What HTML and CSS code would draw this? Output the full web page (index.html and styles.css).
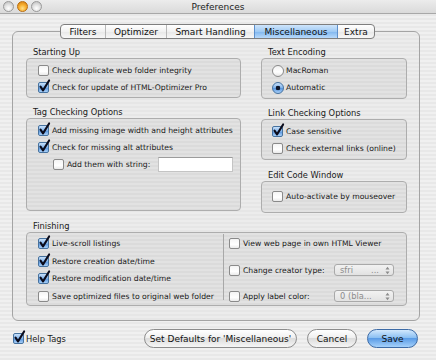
FILE: index.html
```html
<!DOCTYPE html>
<html>
<head>
<meta charset="utf-8">
<title>Preferences</title>
<link rel="stylesheet" href="styles.css">
</head>
<body>
<div class="window">
  <div class="titlebar">
    <div class="lights">
      <span class="light"></span><span class="light min"></span><span class="light"></span>
    </div>
    <div class="title">Preferences</div>
    <div></div>
  </div>

  <div class="tabs">
    <div class="tab t-filters">Filters</div>
    <div class="tab t-opt">Optimizer</div>
    <div class="tab t-smart">Smart Handling</div>
    <div class="tab t-misc sel">Miscellaneous</div>
    <div class="tab t-extra">Extra</div>
  </div>

  <div class="panel">
    <div class="top-grid">
      <div class="col">
        <div class="glabel">Starting Up</div>
        <div class="gbox box-start">
          <div class="row"><span class="cb"></span>Check duplicate web folder integrity</div>
          <div class="row"><span class="cb on"><svg viewBox="0 0 11 11"><path d="M2.3 5.2 L4.6 8.6 L10.2 -0.5"/></svg></span>Check for update of HTML-Optimizer Pro</div>
        </div>
        <div class="glabel gap">Tag Checking Options</div>
        <div class="gbox box-tag">
          <div class="row"><span class="cb on"><svg viewBox="0 0 11 11"><path d="M2.3 5.2 L4.6 8.6 L10.2 -0.5"/></svg></span>Add missing image width and height attributes</div>
          <div class="row"><span class="cb on"><svg viewBox="0 0 11 11"><path d="M2.3 5.2 L4.6 8.6 L10.2 -0.5"/></svg></span>Check for missing alt attributes</div>
          <div class="row indent"><span class="cb"></span><span class="grow">Add them with string:</span><span class="field"></span></div>
        </div>
      </div>
      <div class="col">
        <div class="glabel">Text Encoding</div>
        <div class="gbox box-enc">
          <div class="row"><span class="rb"></span>MacRoman</div>
          <div class="row"><span class="rb on"></span>Automatic</div>
        </div>
        <div class="glabel gap">Link Checking Options</div>
        <div class="gbox box-link">
          <div class="row"><span class="cb on"><svg viewBox="0 0 11 11"><path d="M2.3 5.2 L4.6 8.6 L10.2 -0.5"/></svg></span>Case sensitive</div>
          <div class="row"><span class="cb"></span>Check external links (online)</div>
        </div>
        <div class="glabel gap2">Edit Code Window</div>
        <div class="gbox box-edit">
          <div class="row"><span class="cb"></span>Auto-activate by mouseover</div>
        </div>
      </div>
    </div>

    <div class="glabel gap3">Finishing</div>
    <div class="gbox box-fin">
      <div class="fin-left">
        <div class="frow"><span class="cb on"><svg viewBox="0 0 11 11"><path d="M2.3 5.2 L4.6 8.6 L10.2 -0.5"/></svg></span>Live-scroll listings</div>
        <div class="frow"><span class="cb on"><svg viewBox="0 0 11 11"><path d="M2.3 5.2 L4.6 8.6 L10.2 -0.5"/></svg></span>Restore creation date/time</div>
        <div class="frow"><span class="cb on"><svg viewBox="0 0 11 11"><path d="M2.3 5.2 L4.6 8.6 L10.2 -0.5"/></svg></span>Restore modification date/time</div>
        <div class="frow"><span class="cb"></span>Save optimized files to original web folder</div>
      </div>
      <div class="fin-right">
        <div class="frow"><span class="cb"></span>View web page in own HTML Viewer</div>
        <div class="frow"><span class="cb"></span><span class="grow">Change creator type:</span>
          <span class="popup"><span class="ptext">sfri</span><span class="pdots">...</span><svg class="parr" viewBox="0 0 5 9"><path d="M0.5 3.5 L2.5 0.8 L4.5 3.5 Z M0.5 5.5 L2.5 8.2 L4.5 5.5 Z"/></svg></span>
        </div>
        <div class="frow"><span class="cb"></span><span class="grow">Apply label color:</span>
          <span class="popup"><span class="ptext">0 (bla...</span><svg class="parr" viewBox="0 0 5 9"><path d="M0.5 3.5 L2.5 0.8 L4.5 3.5 Z M0.5 5.5 L2.5 8.2 L4.5 5.5 Z"/></svg></span>
        </div>
      </div>
    </div>
  </div>

  <div class="bottom">
    <div class="help"><span class="cb on"><svg viewBox="0 0 11 11"><path d="M2.3 5.2 L4.6 8.6 L10.2 -0.5"/></svg></span>Help Tags</div>
    <div class="btn b-defaults">Set Defaults for 'Miscellaneous'</div>
    <div class="btn b-cancel">Cancel</div>
    <div class="btn b-save">Save</div>
  </div>
</div>
</body>
</html>
```

FILE: styles.css
```css
* { box-sizing: border-box; }
html, body { margin: 0; padding: 0; }
body {
  width: 436px;
  height: 360px;
  overflow: hidden;
  font-family: "DejaVu Sans", "Liberation Sans", sans-serif;
  font-size: 7.7px;
  color: #1a1a1a;
}
.window {
  width: 436px;
  height: 360px;
  background: repeating-linear-gradient(to bottom, #f0f0f0 0 2px, #e8e8e8 2px 4px);
  display: flex;
  flex-direction: column;
}

/* title bar */
.titlebar {
  height: 14px;
  display: grid;
  grid-template-columns: 1fr auto 1fr;
  align-items: center;
  border-bottom: 1px solid #a8a8a8;
  background: linear-gradient(#ececec, #dadada);
}
.lights { display: flex; gap: 3px; padding-left: 3px; }
.light {
  width: 11px; height: 11px; border-radius: 50%;
  border: 1px solid #9a9a9a;
  background: radial-gradient(circle at 50% 70%, #ffffff 0, #e6e6e6 40%, #b8b8b8 100%);
}
.light.min {
  border-color: #b86d10;
  background: radial-gradient(circle at 50% 70%, #ffe08a 0, #f8b030 45%, #d07810 100%);
}
.title { font-size: 9px; color: #222; }

/* tabs */
.tabs {
  position: relative;
  z-index: 1;
  display: flex;
  margin: 10px 0 0 60px;
  height: 15px;
  width: 315px;
  border: 1px solid #7e7e7e;
  border-radius: 4px;
  overflow: hidden;
  background: linear-gradient(#ffffff, #f1f1f1 50%, #e7e7e7 51%, #f7f7f7);
  font-size: 9px;
}
.tab {
  display: flex; align-items: center; justify-content: center;
  border-right: 1px solid #b8b8b8;
  color: #111;
}
.tab:last-child { border-right: none; }
.t-filters { width: 45px; }
.t-opt { width: 61px; }
.t-smart { width: 88px; }
.t-misc { width: 84px; }
.t-extra { flex: 1; }
.tab.sel {
  background: linear-gradient(#cfe5fb, #9fcaf4 50%, #7fb6ef 51%, #b9dafb);
  border-left: 1px solid #5d8fcb;
  border-right: 1px solid #5d8fcb;
  margin-left: -1px;
}

/* panel */
.panel {
  margin: -8px 16px 0 12px;
  height: 290px;
  border: 1px solid #a4a4a4;
  border-radius: 6px;
  padding: 14px 12px 0 13px;
  background: repeating-linear-gradient(to bottom, #ececec 0 2px, #e6e6e6 2px 4px);
}
.top-grid {
  display: grid;
  grid-template-columns: 215px 146px;
  column-gap: 20px;
}
.col { display: flex; flex-direction: column; }
.glabel {
  height: 12px;
  line-height: 12px;
  padding-left: 7px;
  font-size: 8.3px;
}
.glabel.gap { margin-top: 8px; }
.glabel.gap2 { margin-top: 9px; }
.glabel.gap3 { margin-top: 7px; }

.gbox {
  border: 1px solid #adadad;
  border-radius: 4px;
  background: repeating-linear-gradient(to bottom, #e2e2e2 0 2px, #dbdbdb 2px 4px);
  padding: 3px 0 0 11px;
}
.box-start { height: 40px; }
.box-tag { height: 93px; }
.box-enc { height: 41px; padding-left: 10px; }
.box-link { height: 41px; padding-left: 10px; }
.box-edit { height: 32px; padding: 6px 0 0 10px; }

.row {
  display: flex;
  align-items: center;
  height: 17px;
  white-space: nowrap;
}
.row.indent { padding-left: 15px; padding-right: 7px; }
.grow { flex: 1; }

.cb {
  position: relative;
  flex: none;
  width: 11px; height: 11px;
  margin-right: 3px;
  border: 1px solid #8a8a8a;
  border-radius: 2px;
  background: linear-gradient(#f4f4f4, #ffffff 60%, #eaeaea);
}
.cb.on {
  border-color: #46729f;
  background: linear-gradient(#c9e1fa, #7fb2ea 50%, #5b98e0 55%, #a9d0f8);
}
.cb svg {
  position: absolute;
  left: -1px; top: -2px;
  width: 12px; height: 12px;
  overflow: visible;
}
.cb svg path { fill: none; stroke: #0b0b1a; stroke-width: 1.9; stroke-linecap: round; stroke-linejoin: round; }

.rb {
  flex: none;
  width: 12px; height: 12px;
  margin-right: 2px;
  border: 1px solid #8a8a8a;
  border-radius: 50%;
  background: linear-gradient(#f2f2f2, #ffffff 60%, #e6e6e6);
}
.rb.on {
  border-color: #46729f;
  background: radial-gradient(circle, #10162a 0 2px, transparent 2.6px), linear-gradient(#c9e1fa, #7fb2ea 50%, #5b98e0 55%, #a9d0f8);
}

.field {
  width: 75px; height: 15px;
  background: #fff;
  border: 1px solid #c4c4c4;
  border-top-color: #9c9c9c;
}

/* finishing */
.box-fin {
  height: 74px;
  padding: 2px 0 0 11px;
  display: flex;
}
.fin-left {
  width: 186px;
  border-right: 1px solid #a8a8a8;
  margin-bottom: 5px;
  margin-top: -1px;
  padding-top: 1px;
}
.fin-left .frow { height: 17.5px; }
.fin-right {
  flex: 1;
  padding: 0 12px 0 5px;
  display: flex;
  flex-direction: column;
  justify-content: space-between;
  height: 70px;
}
.frow {
  display: flex;
  align-items: center;
  height: 17.5px;
  white-space: nowrap;
}
.popup {
  display: flex;
  align-items: center;
  width: 60px;
  height: 12px;
  border: 1px solid #a9a9a9;
  border-radius: 3px;
  background: linear-gradient(#f2f2f2, #e2e2e2);
  color: #8c8c8c;
  padding: 0 3px 0 5px;
  font-size: 8.3px;
}
.ptext { flex: 1; }
.pdots { margin-right: 6px; }
.parr { width: 5px; height: 9px; }
.parr path { fill: #8c8c8c; }

/* bottom */
.bottom {
  flex: 1;
  display: flex;
  align-items: center;
  padding: 0 18px 4px 13px;
  gap: 10px;
}
.help {
  display: flex;
  align-items: center;
  font-size: 8.3px;
  margin-right: auto;
}
.help .cb { margin-right: 2px; }
.btn {
  height: 19px;
  border-radius: 10px;
  border: 1px solid #8c8c8c;
  background: linear-gradient(#ffffff, #f0f0f0 45%, #dcdcdc 50%, #f6f6f6);
  display: flex; align-items: center; justify-content: center;
  font-size: 9px;
  color: #111;
}
.b-defaults { width: 153px; }
.b-cancel { width: 50px; }
.b-save {
  width: 51px;
  border-color: #3d6ba6;
  background: linear-gradient(#d2e8fd, #8cc0f3 45%, #5b9ce6 50%, #a5d1fb);
}
```
